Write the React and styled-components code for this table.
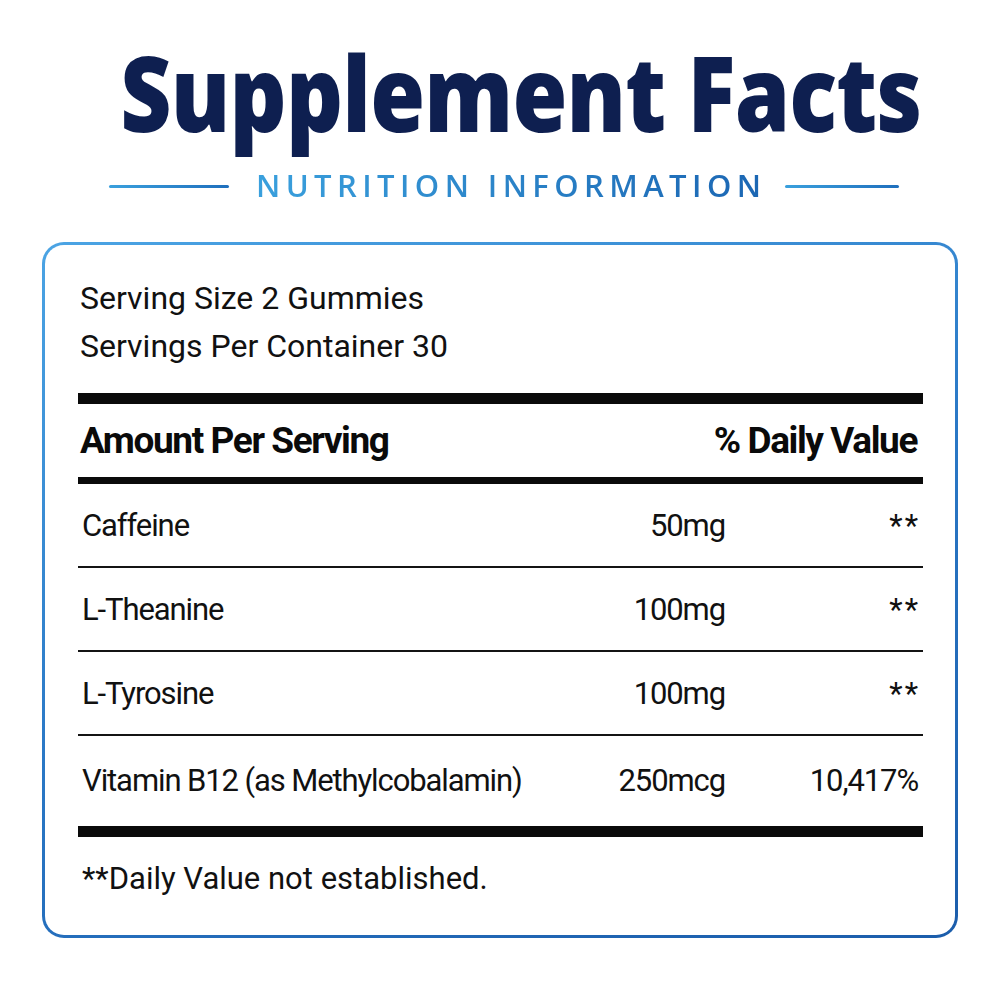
import React from 'react';
import styled, { createGlobalStyle } from 'styled-components';

const GlobalStyle = createGlobalStyle`
  html, body {
    margin: 0;
    padding: 0;
    background: #ffffff;
  }
  body {
    width: 1000px;
    height: 1000px;
    overflow: hidden;
  }
`;

const Page = styled.div`
  width: 1000px;
  height: 1000px;
  box-sizing: border-box;
  padding-top: 34px;
  display: flex;
  flex-direction: column;
  align-items: center;
  background: #ffffff;
`;

const Title = styled.h1`
  margin: 0 0 0 42px;
  font-family: "Open Sans", "Liberation Sans", sans-serif;
  font-weight: 800;
  font-size: 105px;
  line-height: 116px;
  letter-spacing: -1px;
  color: #0e1f50;
  white-space: nowrap;
  transform: scaleX(0.847);
  transform-origin: center;
`;

const SubRow = styled.div`
  display: flex;
  align-items: center;
  margin: 15px 0 0 8px;
  height: 40px;
`;

const Rule = styled.span`
  display: block;
  width: ${p => p.$w}px;
  height: 3px;
  margin: 2px ${p => p.$mr || 0}px 0 ${p => p.$ml || 0}px;
  background: linear-gradient(90deg, #3aa0dd, #1f6fbd);
  border-radius: 2px;
`;

const Subtitle = styled.div`
  font-family: "Open Sans", "Liberation Sans", sans-serif;
  font-weight: 600;
  font-size: 31px;
  line-height: 40px;
  letter-spacing: 5.4px;
  margin-right: -5.4px;
  background: linear-gradient(90deg, #3aa0dd, #1b66b3);
  -webkit-background-clip: text;
  background-clip: text;
  color: transparent;
  white-space: nowrap;
`;

const Card = styled.div`
  margin-top: 37px;
  width: 916px;
  height: 696px;
  box-sizing: border-box;
  border: 3px solid transparent;
  border-radius: 22px;
  background:
    linear-gradient(#ffffff, #ffffff) padding-box,
    linear-gradient(160deg, #4ba4e4 0%, #2a78c6 50%, #1b5dab 100%) border-box;
  padding: 29px 32px 0 33px;
  display: flex;
  flex-direction: column;
  font-family: "Roboto", "Liberation Sans", sans-serif;
  color: #111111;
`;

const ServingLine = styled.div`
  font-size: 32px;
  line-height: 48px;
  padding-left: 2px;
`;

const Bar = styled.div`
  height: ${p => p.$h}px;
  background: #0a0a0a;
  margin-top: ${p => p.$mt || 0}px;
`;

const HeadRow = styled.div`
  display: flex;
  justify-content: space-between;
  height: 73px;
  line-height: 73px;
  padding: 0 6px 0 2px;
  font-weight: 700;
  font-size: 37px;
  letter-spacing: -1.4px;
  color: #0a0a0a;
`;

const Row = styled.div`
  display: grid;
  grid-template-columns: 1fr 170px 198px;
  height: ${p => (p.$last ? 90 : 80)}px;
  line-height: ${p => (p.$last ? 90 : 80)}px;
  padding-top: ${p => (p.$last ? 0 : 2)}px;
  border-bottom: ${p => (p.$last ? 'none' : '2px solid #141414')};
  font-size: 31px;
  letter-spacing: -1.1px;
  white-space: nowrap;
`;

const Name = styled.span`
  padding-left: 4px;
`;

const Num = styled.span`
  text-align: right;
  padding-right: ${p => p.$pr || 0}px;
  letter-spacing: ${p => (p.$stars ? '2px' : 'inherit')};
`;

const Foot = styled.div`
  margin-top: 22px;
  font-size: 31px;
  line-height: 40px;
  padding-left: 4px;
`;

const rows = [
  ['Caffeine', '50mg', '**'],
  ['L-Theanine', '100mg', '**'],
  ['L-Tyrosine', '100mg', '**'],
  ['Vitamin B12 (as Methylcobalamin)', '250mcg', '10,417%'],
];

export default function App() {
  return (
    <>
      <GlobalStyle />
      <Page>
        <Title>Supplement Facts</Title>
        <SubRow>
          <Rule $w={120} $mr={27} />
          <Subtitle>NUTRITION INFORMATION</Subtitle>
          <Rule $w={114} $ml={24} />
        </SubRow>
        <Card>
          <ServingLine>Serving Size 2 Gummies</ServingLine>
          <ServingLine>Servings Per Container 30</ServingLine>
          <Bar $h={11} $mt={23} />
          <HeadRow>
            <span>Amount Per Serving</span>
            <span>% Daily Value</span>
          </HeadRow>
          <Bar $h={7} />
          {rows.map((r, i) => (
            <Row key={r[0]} $last={i === rows.length - 1}>
              <Name>{r[0]}</Name>
              <Num>{r[1]}</Num>
              <Num $pr={r[2] === '**' ? 3 : 5} $stars={r[2] === '**'}>{r[2]}</Num>
            </Row>
          ))}
          <Bar $h={11} />
          <Foot>**Daily Value not established.</Foot>
        </Card>
      </Page>
    </>
  );
}
